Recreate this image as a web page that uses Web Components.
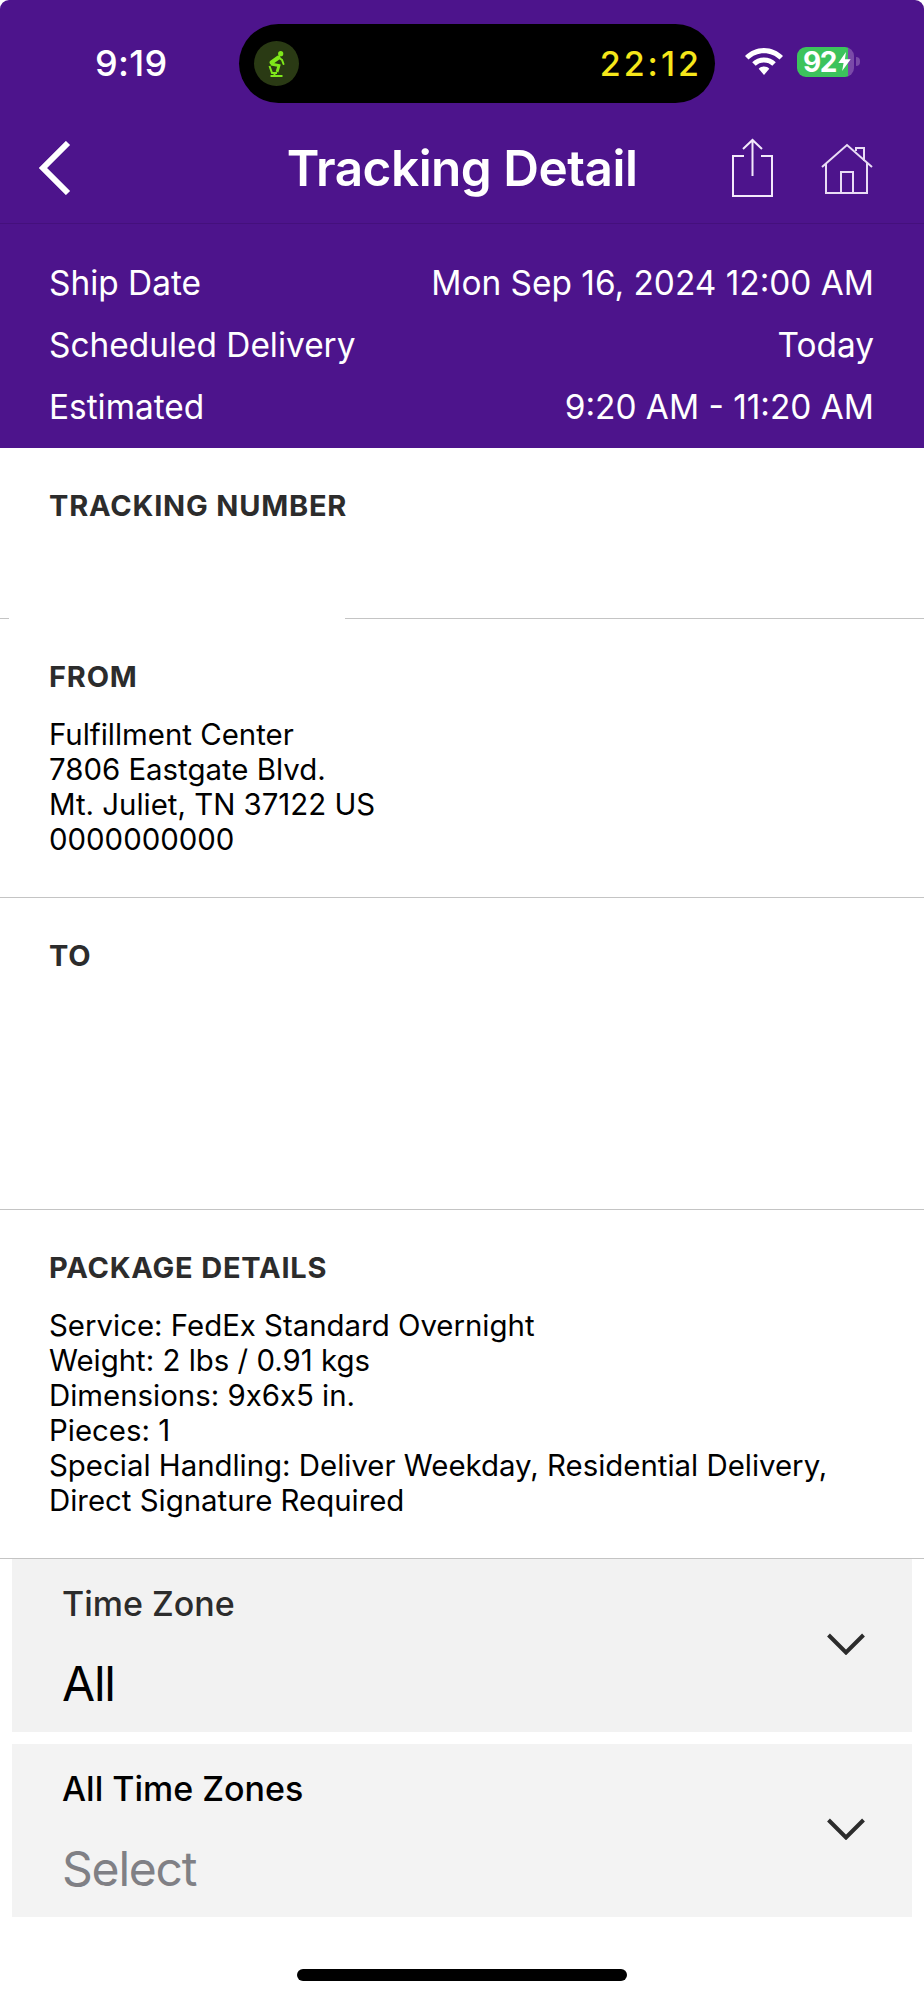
<!DOCTYPE html>
<html>
<head>
<meta charset="utf-8">
<title>Tracking Detail</title>
<style>
    html, body { margin: 0; padding: 0; background: #fff; }
    body { font-family: Inter, "Liberation Sans", sans-serif; width: 924px; }
</style>
</head>
<body>
<tracking-header>
    <detail-row slot="rows" label="Ship Date" value="Mon Sep 16, 2024 12:00 AM"></detail-row>
    <detail-row slot="rows" label="Scheduled Delivery" value="Today"></detail-row>
    <detail-row slot="rows" label="Estimated" value="9:20 AM - 11:20 AM"></detail-row>
</tracking-header>
<info-section title="TRACKING NUMBER" style="height:171px" redacted></info-section>
<info-section title="FROM">Fulfillment Center<br>7806 Eastgate Blvd.<br>Mt. Juliet, TN 37122 US<br>0000000000</info-section>
<info-section title="TO" style="height:312px"></info-section>
<info-section title="PACKAGE DETAILS">Service: FedEx Standard Overnight<br>Weight: 2 lbs / 0.91 kgs<br>Dimensions: 9x6x5 in.<br>Pieces: 1<br>Special Handling: Deliver Weekday, Residential Delivery,<br>Direct Signature Required</info-section>
<select-box label="Time Zone" value="All"></select-box>
<select-box label="All Time Zones" value="Select" placeholder></select-box>
<home-bar></home-bar>

<script>
class StatusBar extends HTMLElement {
    constructor() {
        super();
        const shadow = this.attachShadow({ mode: 'open' });
        shadow.innerHTML = `
            <style>
                :host {
                    display: grid;
                    grid-template-columns: 239px 476px 1fr;
                    align-items: center;
                    padding-top: 24px;
                    color: #fff;
                }
                .time {
                    padding-left: 95px;
                    font-size: 36px;
                    font-weight: 500;
                    letter-spacing: 0.3px;
                    padding-bottom: 2px;
                }
                .island {
                    height: 79px;
                    border-radius: 40px;
                    background: #000;
                    display: flex;
                    align-items: center;
                    justify-content: space-between;
                    padding: 0 13px 0 15px;
                    box-sizing: border-box;
                }
                .bike {
                    width: 45px;
                    height: 45px;
                    border-radius: 50%;
                    background: #2a3a14;
                    display: flex;
                    align-items: center;
                    justify-content: center;
                }
                .timer {
                    color: #f6e71a;
                    font-size: 34px;
                    font-weight: 500;
                    letter-spacing: 3px;
                }
                .right {
                    display: flex;
                    align-items: center;
                    padding-left: 30px;
                    padding-bottom: 4px;
                }
                .battery {
                    margin-left: 14px;
                    width: 57px;
                    height: 30px;
                    border-radius: 9px;
                    background: linear-gradient(90deg, #3cc35c 0 51px, #7a4aa8 51px);
                    display: flex;
                    align-items: center;
                    font-size: 28px;
                    font-weight: 700;
                    padding-left: 6px;
                    box-sizing: border-box;
                    letter-spacing: -1.5px;
                }
                .battery svg { margin-left: 2px; flex: none; }
                .nub {
                    width: 4px;
                    height: 9px;
                    margin-left: 2px;
                    border-radius: 0 4px 4px 0;
                    background: #7a4aa8;
                }
            </style>
            <div class="time">9:19</div>
            <div class="island">
                <div class="bike">
                    <svg width="17" height="26" viewBox="0 0 17 26" fill="none" stroke="#7fe81a" stroke-width="2">
                        <circle cx="12.700" cy="2.700" r="2.600" fill="#7fe81a" stroke="none"/>
                        <path d="M10.500 6.500 L3.500 11.500" stroke-width="4" stroke-linecap="round"/>
                        <path d="M10.500 6.500 L14 9 L15.500 13" stroke-linecap="round"/>
                        <path d="M3 13 L11 14.500 L9 21" stroke-width="2.800"/>
                        <path d="M1.500 15 L4 22 L9 22 M6.500 22 L6.500 25 M2.500 25 L14.500 25"/>
                    </svg>
                </div>
                <div class="timer">22:12</div>
            </div>
            <div class="right">
                <svg width="38" height="27" viewBox="0 0 38 27" fill="#fff">
                    <path d="M19 0 C26.500 0 33 3 38 8 L34.500 11.500 C30.500 7.500 25 5.200 19 5.200 C13 5.200 7.500 7.500 3.500 11.500 L0 8 C5 3 11.500 0 19 0Z"/>
                    <path d="M19 9.500 C23.700 9.500 27.800 11.300 30.800 14.300 L27.300 17.800 C25.200 15.700 22.300 14.500 19 14.500 C15.700 14.500 12.800 15.700 10.700 17.800 L7.200 14.300 C10.200 11.300 14.300 9.500 19 9.500Z"/>
                    <path d="M19 18.500 C21.200 18.500 23 19.300 24.300 20.800 L19 27 L13.700 20.800 C15 19.300 16.800 18.500 19 18.500Z"/>
                </svg>
                <div class="battery">92<svg width="13" height="19" viewBox="0 0 13 20" fill="#fff"><path d="M8 0 L0 11.500 L5.500 11.500 L4 20 L13 7.500 L7 7.500Z"/></svg></div>
                <div class="nub"></div>
            </div>
        `;
    }
}
window.customElements.define('status-bar', StatusBar);

class NavBar extends HTMLElement {
    constructor() {
        super();
        const shadow = this.attachShadow({ mode: 'open' });
        shadow.innerHTML = `
            <style>
                :host {
                    display: grid;
                    grid-template-columns: 1fr auto 1fr;
                    align-items: center;
                    height: 121px;
                    padding-top: 10px;
                    box-sizing: border-box;
                    color: #fff;
                    border-bottom: 1px solid #44107c;
                }
                svg { display: block; }
                .back { padding-left: 38px; }
                h1 {
                    margin: 0;
                    font-size: 49.500px;
                    font-weight: 600;
                    letter-spacing: -0.5px;
                }
                .actions {
                    display: flex;
                    justify-content: flex-end;
                    align-items: center;
                    gap: 47px;
                    padding-right: 51px;
                }
            </style>
            <div class="back">
                <svg width="34" height="54" viewBox="0 0 34 54" fill="none" stroke="#fff" stroke-width="6"><path d="M30 2 L5 27 L30 52"/></svg>
            </div>
            <h1>Tracking Detail</h1>
            <div class="actions">
                <svg width="43" height="60" viewBox="0 0 43 60" fill="none" stroke="#f3e9fb" stroke-width="2"><path d="M13 18 L2 18 L2 58 L41 58 L41 18 L30 18 M21.500 38 L21.500 2 M12 11 L21.500 2 L31 11"/></svg>
                <svg width="52" height="51" viewBox="0 0 52 51" fill="none" stroke="#e9dcf5" stroke-width="2"><path d="M1 24 L26 2 L51 24 M5 20 L5 50 L46 50 L46 20 M20 50 L20 29 L32 29 L32 50 M35 8 L35 5 L43 5 L43 18"/></svg>
            </div>
        `;
    }
}
window.customElements.define('nav-bar', NavBar);

class TrackingHeader extends HTMLElement {
    constructor() {
        super();
        const shadow = this.attachShadow({ mode: 'open' });
        shadow.innerHTML = `
            <style>
                :host {
                    display: block;
                    background: #4d148c;
                    height: 448px;
                    overflow: hidden;
                    border-radius: 9px 9px 0 0;
                }
                .rows { padding-top: 28px; }
            </style>
            <status-bar></status-bar>
            <nav-bar></nav-bar>
            <div class="rows"><slot name="rows"></slot></div>
        `;
    }
}
window.customElements.define('tracking-header', TrackingHeader);

class DetailRow extends HTMLElement {
    constructor() {
        super();
        const shadow = this.attachShadow({ mode: 'open' });
        shadow.innerHTML = `
            <style>
                :host {
                    display: flex;
                    justify-content: space-between;
                    align-items: center;
                    height: 62px;
                    padding: 0 50px 0 49px;
                    color: #fff;
                    font-size: 33.400px;
                }
            </style>
            <span></span><span></span>
        `;
        const spans = shadow.querySelectorAll('span');
        spans[0].textContent = this.getAttribute('label');
        spans[1].textContent = this.getAttribute('value');
    }
}
window.customElements.define('detail-row', DetailRow);

class InfoSection extends HTMLElement {
    constructor() {
        super();
        const shadow = this.attachShadow({ mode: 'open' });
        shadow.innerHTML = `
            <style>
                :host {
                    display: block;
                    position: relative;
                    box-sizing: content-box;
                    padding: 40px 49px;
                    border-bottom: 1px solid #c4c4c4;
                    color: #000;
                    font-size: 29.400px;
                    line-height: 35px;
                    font-feature-settings: "calt" 0;
                }
                :host([style]) { box-sizing: border-box; }
                h2 {
                    margin: 0 0 22px;
                    font-size: 29px;
                    line-height: 36px;
                    font-weight: 700;
                    letter-spacing: 0.8px;
                    color: #2c2c2c;
                }
                .patch {
                    display: none;
                    position: absolute;
                    left: 9px;
                    bottom: -2px;
                    width: 336px;
                    height: 6px;
                    background: #fff;
                }
                :host([redacted]) .patch { display: block; }
            </style>
            <h2></h2>
            <slot></slot>
            <div class="patch"></div>
        `;
        shadow.querySelector('h2').textContent = this.getAttribute('title');
    }
}
window.customElements.define('info-section', InfoSection);

class SelectBox extends HTMLElement {
    constructor() {
        super();
        const shadow = this.attachShadow({ mode: 'open' });
        shadow.innerHTML = `
            <style>
                :host {
                    display: flex;
                    align-items: center;
                    justify-content: space-between;
                    height: 173px;
                    margin: 0 12px 12px;
                    padding: 0 47px 0 50px;
                    box-sizing: border-box;
                    background: #f2f2f2;
                }
                .text { padding-top: 7px; }
                .label {
                    font-size: 34px;
                    line-height: 40px;
                    font-weight: 500;
                    color: #2c2c2c;
                    margin-bottom: 30px;
                }
                .value {
                    font-size: 48px;
                    line-height: 60px;
                    letter-spacing: -1.200px;
                    color: #000;
                }
                svg { margin-bottom: 3px; }
                :host([placeholder]) { background: #f3f3f3; }
                :host([placeholder]) .label { color: #000; }
                :host([placeholder]) .value { color: #808085; }
            </style>
            <div class="text">
                <div class="label"></div>
                <div class="value"></div>
            </div>
            <svg width="38" height="22" viewBox="0 0 38 22" fill="none" stroke="#2c2c2c" stroke-width="4"><path d="M1.500 2 L19 19.500 L36.500 2"/></svg>
        `;
        shadow.querySelector('.label').textContent = this.getAttribute('label');
        shadow.querySelector('.value').textContent = this.getAttribute('value');
    }
}
window.customElements.define('select-box', SelectBox);

class HomeBar extends HTMLElement {
    constructor() {
        super();
        const shadow = this.attachShadow({ mode: 'open' });
        shadow.innerHTML = `
            <style>
                :host { display: block; padding-top: 40px; }
                div {
                    width: 330px;
                    height: 12px;
                    margin: 0 auto;
                    border-radius: 6px;
                    background: #000;
                }
            </style>
            <div></div>
        `;
    }
}
window.customElements.define('home-bar', HomeBar);
</script>
</body>
</html>
